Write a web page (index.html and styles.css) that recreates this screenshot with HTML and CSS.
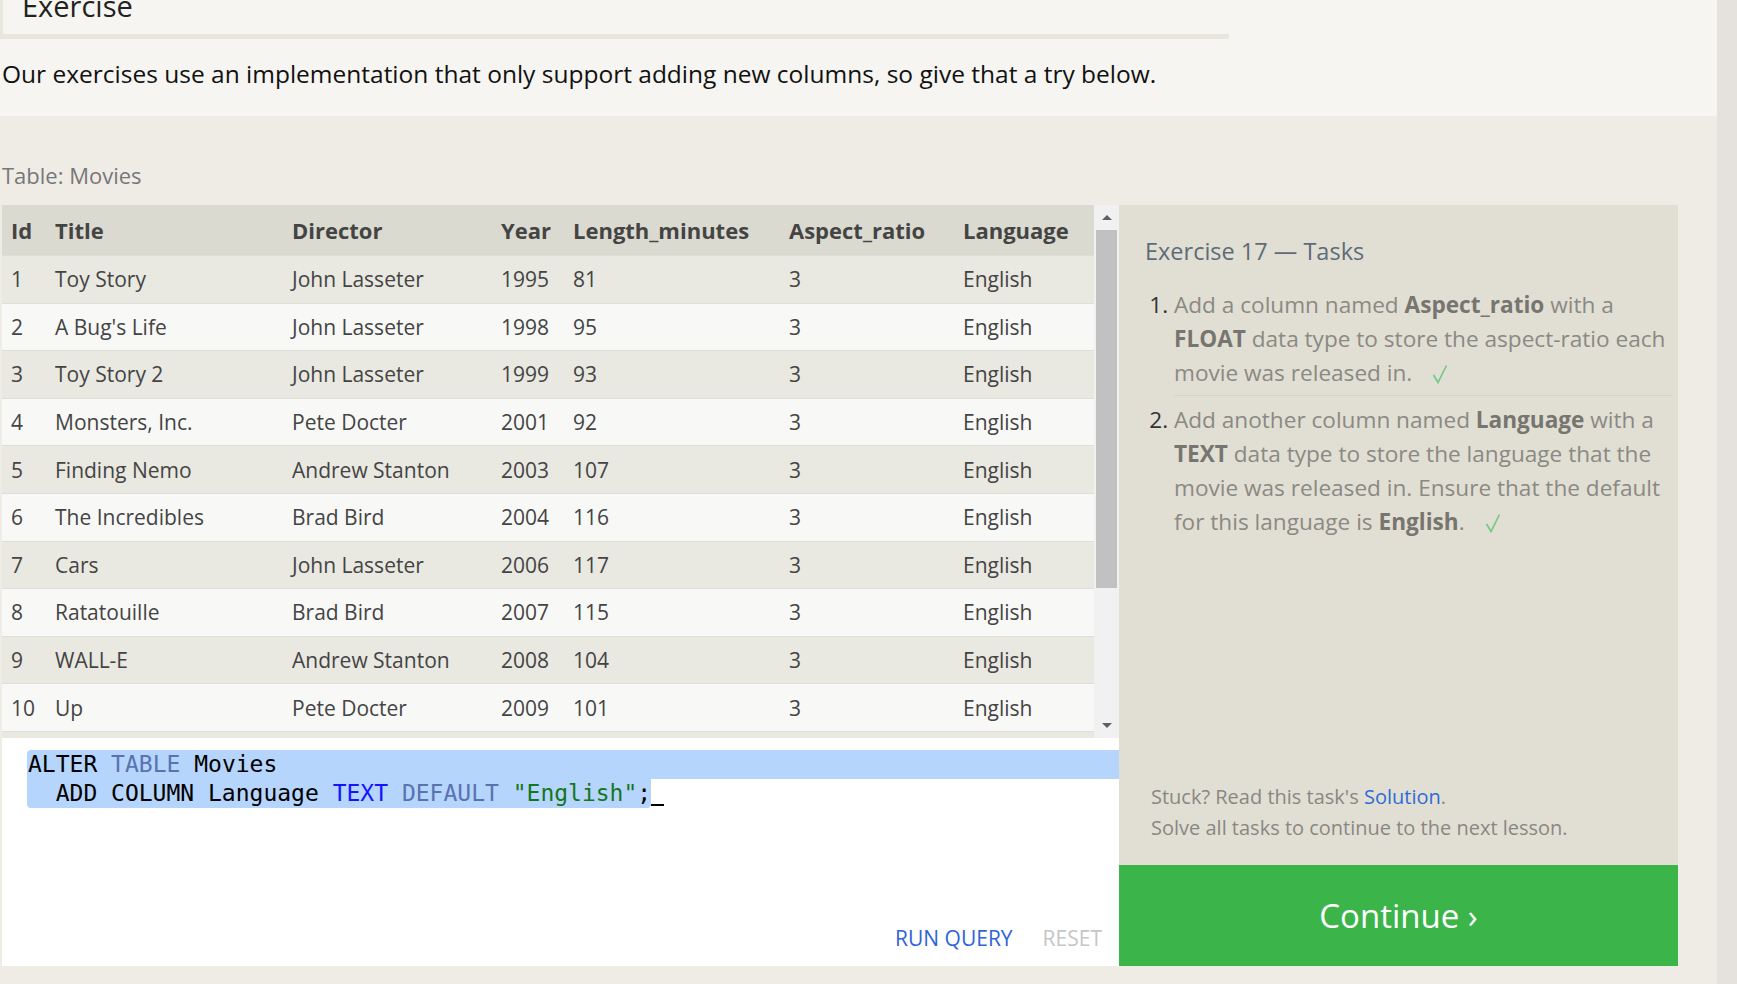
FILE: index.html
```html
<!DOCTYPE html>
<html lang="en">
<head>
<meta charset="utf-8">
<title>SQL Lesson 17 — Altering tables</title>
<link rel="stylesheet" href="styles.css">
</head>
<body>
<div class="frame">
  <div class="page">
    <section class="intro">
      <div class="heading-box"><h2 class="heading">Exercise</h2></div>
      <p class="lead">Our exercises use an implementation that only support adding new columns, so give that a try below.</p>
    </section>

    <section class="exercise">
      <div class="caption">Table: Movies</div>
      <div class="workspace">
        <div class="left">
          <div class="table-view">
            <div class="table-clip">
              <table class="data">
                <colgroup>
                  <col class="c-id"><col class="c-title"><col class="c-director"><col class="c-year"><col class="c-length"><col class="c-aspect"><col class="c-lang">
                </colgroup>
                <thead>
                  <tr><th>Id</th><th>Title</th><th>Director</th><th>Year</th><th>Length_minutes</th><th>Aspect_ratio</th><th>Language</th></tr>
                </thead>
                <tbody>
                  <tr><td>1</td><td>Toy Story</td><td>John Lasseter</td><td>1995</td><td>81</td><td>3</td><td>English</td></tr>
                  <tr><td>2</td><td>A Bug's Life</td><td>John Lasseter</td><td>1998</td><td>95</td><td>3</td><td>English</td></tr>
                  <tr><td>3</td><td>Toy Story 2</td><td>John Lasseter</td><td>1999</td><td>93</td><td>3</td><td>English</td></tr>
                  <tr><td>4</td><td>Monsters, Inc.</td><td>Pete Docter</td><td>2001</td><td>92</td><td>3</td><td>English</td></tr>
                  <tr><td>5</td><td>Finding Nemo</td><td>Andrew Stanton</td><td>2003</td><td>107</td><td>3</td><td>English</td></tr>
                  <tr><td>6</td><td>The Incredibles</td><td>Brad Bird</td><td>2004</td><td>116</td><td>3</td><td>English</td></tr>
                  <tr><td>7</td><td>Cars</td><td>John Lasseter</td><td>2006</td><td>117</td><td>3</td><td>English</td></tr>
                  <tr><td>8</td><td>Ratatouille</td><td>Brad Bird</td><td>2007</td><td>115</td><td>3</td><td>English</td></tr>
                  <tr><td>9</td><td>WALL-E</td><td>Andrew Stanton</td><td>2008</td><td>104</td><td>3</td><td>English</td></tr>
                  <tr><td>10</td><td>Up</td><td>Pete Docter</td><td>2009</td><td>101</td><td>3</td><td>English</td></tr>
                  <tr class="peek"><td></td><td></td><td></td><td></td><td></td><td></td><td></td></tr>
                </tbody>
              </table>
            </div>
            <div class="vscroll">
              <div class="arrow up"></div>
              <div class="thumb"></div>
              <div class="track"></div>
              <div class="arrow down"></div>
            </div>
          </div>

          <div class="editor">
            <div class="code">
              <div class="line line-sel"><span>ALTER</span> <span class="k-soft">TABLE</span> Movies</div>
              <div class="line"><span class="sel">  ADD COLUMN Language <span class="k-type">TEXT</span> <span class="k-soft">DEFAULT</span> <span class="k-str">"English"</span>;</span><span class="cursor"></span></div>
            </div>
            <div class="actions">
              <button class="btn run" type="button">RUN QUERY</button>
              <button class="btn reset" type="button">RESET</button>
            </div>
          </div>
        </div>

        <div class="right">
          <div class="tasks">
            <h3 class="tasks-title">Exercise 17 — Tasks</h3>
            <ol class="task-list">
              <li>Add a column named <strong>Aspect_ratio</strong> with a <strong>FLOAT</strong> data type to store the aspect-ratio each movie was released in.<svg class="check" viewBox="0 0 16 20" width="16" height="20" aria-hidden="true"><polyline points="1.5,11 6,18.5 14.5,1.5" fill="none" stroke="#6fc97f" stroke-width="1.6"/></svg></li>
              <li>Add another column named <strong>Language</strong> with a <strong>TEXT</strong> data type to store the language that the movie was released in. Ensure that the default for this language is <strong>English</strong>.<svg class="check" viewBox="0 0 16 20" width="16" height="20" aria-hidden="true"><polyline points="1.5,11 6,18.5 14.5,1.5" fill="none" stroke="#6fc97f" stroke-width="1.6"/></svg></li>
            </ol>
            <div class="hint">
              <div>Stuck? Read this task's <a class="link" href="#solution">Solution</a>.</div>
              <div>Solve all tasks to continue to the next lesson.</div>
            </div>
          </div>
          <a class="continue" href="#next">Continue ›</a>
        </div>
      </div>
    </section>
  </div>
  <div class="edge"></div>
</div>
</body>
</html>
```

FILE: styles.css
```css
* { box-sizing: border-box; }

html, body {
  margin: 0;
  padding: 0;
}

body {
  background: #efece6;
  font-family: "Open Sans", "Noto Sans", sans-serif;
  color: #222;
  overflow: hidden;
}

.frame {
  display: flex;
  min-height: 984px;
}

.page {
  flex: 1;
  min-width: 0;
}

.edge {
  width: 20px;
  background: #e5e1dd;
}

/* ---------- intro ---------- */
.intro {
  display: flow-root;
  background: #f6f5f1;
  padding-bottom: 26px;
}

.heading-box {
  width: 1229px;
  margin-top: -14px;
  border-left: 3px solid #e8e6df;
  border-bottom: 5px solid #e8e6df;
  padding: 0 0 8px 19px;
}

.heading {
  margin: 0;
  font-size: 29px;
  line-height: 40px;
  font-weight: 400;
  color: #222;
}

.lead {
  margin: 19px 0 0;
  padding-left: 2px;
  font-size: 24.5px;
  line-height: 32px;
  color: #111;
}

/* ---------- exercise ---------- */
.exercise {
  padding: 44px 0 0 2px;
}

.caption {
  font-size: 22px;
  line-height: 30px;
  color: #777;
  margin-bottom: 15px;
}

.workspace {
  display: flex;
}

.left {
  width: 1117px;
  display: flex;
  flex-direction: column;
}

.table-view {
  display: flex;
  height: 533px;
}

.table-clip {
  width: 1092px;
  overflow: hidden;
}

.data {
  width: 1092px;
  table-layout: fixed;
  border-collapse: separate;
  border-spacing: 0;
  font-size: 21px;
  color: #444;
}

.c-id { width: 44px; }
.c-title { width: 237px; }
.c-director { width: 209px; }
.c-year { width: 72px; }
.c-length { width: 216px; }
.c-aspect { width: 174px; }
.c-lang { width: 140px; }

.data th {
  height: 50px;
  padding: 0 9px;
  background: #dbdad0;
  text-align: left;
  font-size: 22px;
  font-weight: 700;
  white-space: nowrap;
}

.data td {
  height: 47.6px;
  padding: 0 9px;
  border-top: 1px solid #dfded8;
  white-space: nowrap;
}

.data tbody tr:nth-child(odd) td { background: #e9e8e1; }
.data tbody tr:nth-child(even) td { background: #f8f8f7; }

.vscroll {
  width: 25px;
  background: #f1f1f1;
  display: flex;
  flex-direction: column;
  align-items: center;
}

.arrow {
  height: 25px;
  width: 100%;
  display: flex;
  align-items: center;
  justify-content: center;
}

.arrow::before {
  content: "";
  border-left: 5px solid transparent;
  border-right: 5px solid transparent;
}

.arrow.up::before { border-bottom: 5px solid #5f5f5f; }
.arrow.down::before { border-top: 5px solid #5f5f5f; }

.thumb {
  width: 21px;
  height: 358px;
  background: #c1c1c1;
}

.track { flex: 1; }

/* ---------- editor ---------- */
.editor {
  height: 228px;
  background: #fff;
  display: flex;
  flex-direction: column;
}

.code {
  margin: 12px 0 0 25px;
  font-family: "DejaVu Sans Mono", "Liberation Mono", monospace;
  font-size: 23px;
  line-height: 29px;
  color: #000;
}

.line {
  height: 29px;
  padding-left: 1px;
  white-space: pre;
}

.line-sel {
  background: #b5d5fc;
  border-top-left-radius: 4px;
}

.sel {
  display: inline-block;
  background: #b5d5fc;
  margin-left: -1px;
  padding-left: 1px;
  border-bottom-left-radius: 4px;
  border-bottom-right-radius: 4px;
}

.k-soft { color: #5a72b0; }
.k-type { color: #1414ff; }
.k-str { color: #16761c; }

.cursor {
  display: inline-block;
  vertical-align: top;
  width: 13px;
  height: 27px;
  border-bottom: 2px solid #000;
}

.actions {
  margin-top: auto;
  display: flex;
  justify-content: flex-end;
  gap: 30px;
  padding: 0 17px 13px 0;
}

.btn {
  background: none;
  border: 0;
  padding: 0;
  font-family: inherit;
  font-size: 21px;
  line-height: 30px;
  cursor: pointer;
}

.run { color: #2f64d6; }
.reset { color: #c6c6c6; }

/* ---------- tasks ---------- */
.right {
  width: 559px;
  display: flex;
  flex-direction: column;
}

.tasks {
  height: 660px;
  background: #e1dfd4;
  padding: 31px 6px 22px 26px;
  display: flex;
  flex-direction: column;
}

.tasks-title {
  margin: 0;
  font-size: 23.5px;
  line-height: 30px;
  font-weight: 400;
  color: #5e6b78;
}

.task-list {
  margin: 22px 0 0;
  padding-left: 29px;
  font-size: 22.6px;
  line-height: 34px;
  color: #8b8983;
}

.task-list li::marker { color: #333; }

.task-list li {
  padding-bottom: 5px;
}

.task-list li + li {
  border-top: 1px solid #d6d4c9;
  padding-top: 7px;
}

.task-list strong {
  color: #77756f;
  font-weight: 700;
}

.check {
  margin-left: 20px;
  vertical-align: -3px;
}

.hint {
  margin-top: auto;
  font-size: 20px;
  line-height: 31px;
  color: #8a8783;
  padding-left: 6px;
}

.link {
  color: #2f6bd6;
  text-decoration: none;
}

.continue {
  flex: 1;
  background: #3bb54a;
  color: #fff;
  font-size: 33px;
  display: flex;
  align-items: center;
  justify-content: center;
  text-decoration: none;
}
```
